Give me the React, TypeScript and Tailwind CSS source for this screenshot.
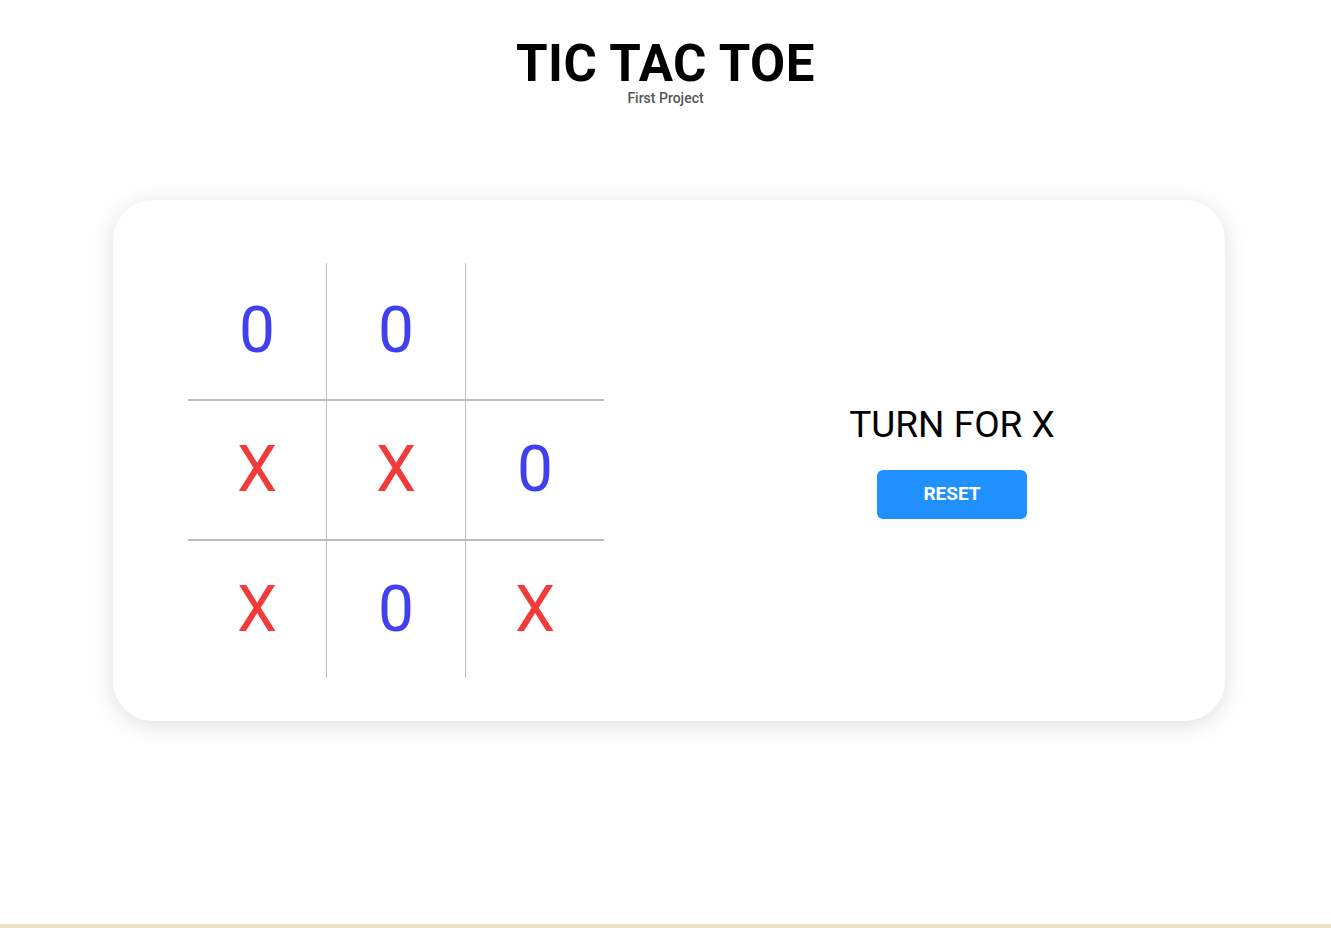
import React, { useState } from 'react';

type Cell = 'X' | '0' | '';

const initialBoard: Cell[] = ['0', '0', '', 'X', 'X', '0', 'X', '0', 'X'];

export default function App() {
  const [board, setBoard] = useState<Cell[]>(initialBoard);
  const [turn, setTurn] = useState<'X' | '0'>('X');

  const play = (i: number) => {
    if (board[i]) return;
    const next = [...board];
    next[i] = turn;
    setBoard(next);
    setTurn(turn === 'X' ? '0' : 'X');
  };

  return (
    <div className="min-h-[928px] flex flex-col bg-white font-['Roboto',sans-serif] text-black">
      {/* Header */}
      <header className="flex flex-col items-center pt-[38px]">
        <h1 className="text-[51px] font-bold leading-[52px] tracking-[0.5px]">TIC TAC TOE</h1>
        <span className="text-[14px] font-medium text-[#555] leading-[16px]">First Project</span>
      </header>

      {/* Game card */}
      <main className="mx-[113px] mt-[94px] w-[1112px] h-[521px] bg-white rounded-[40px] shadow-[0_4px_22px_rgba(0,0,0,0.13)] flex items-start pl-[75px]">
        <div className="mt-[63px] grid grid-cols-[139px_139px_138px] grid-rows-[138px_140px_137px]">
          {board.map((cell, i) => (
            <button
              key={i}
              onClick={() => play(i)}
              className={`flex items-center justify-center text-[64px] leading-none border-[#bdbdbd] ${
                i % 3 !== 2 ? 'border-r' : ''
              } ${i < 6 ? 'border-b-2' : ''} ${cell === 'X' ? 'text-[#f23a3a]' : 'text-[#4040ee]'}`}
            >
              {cell}
            </button>
          ))}
        </div>

        <div className="flex-1 self-center flex flex-col items-center pl-[75px]">
          <p className="text-[37px] leading-[44px]">TURN FOR {turn}</p>
          <button
            onClick={() => {
              setBoard(['', '', '', '', '', '', '', '', '']);
              setTurn('X');
            }}
            className="mt-[23px] w-[150px] h-[49px] rounded-[6px] bg-[#2090ff] text-white text-[19px] font-bold"
          >
            RESET
          </button>
        </div>
      </main>

      <div className="mt-auto h-[4px] border-t border-[#e6e2d6] bg-[#ece2c4]" />
    </div>
  );
}
